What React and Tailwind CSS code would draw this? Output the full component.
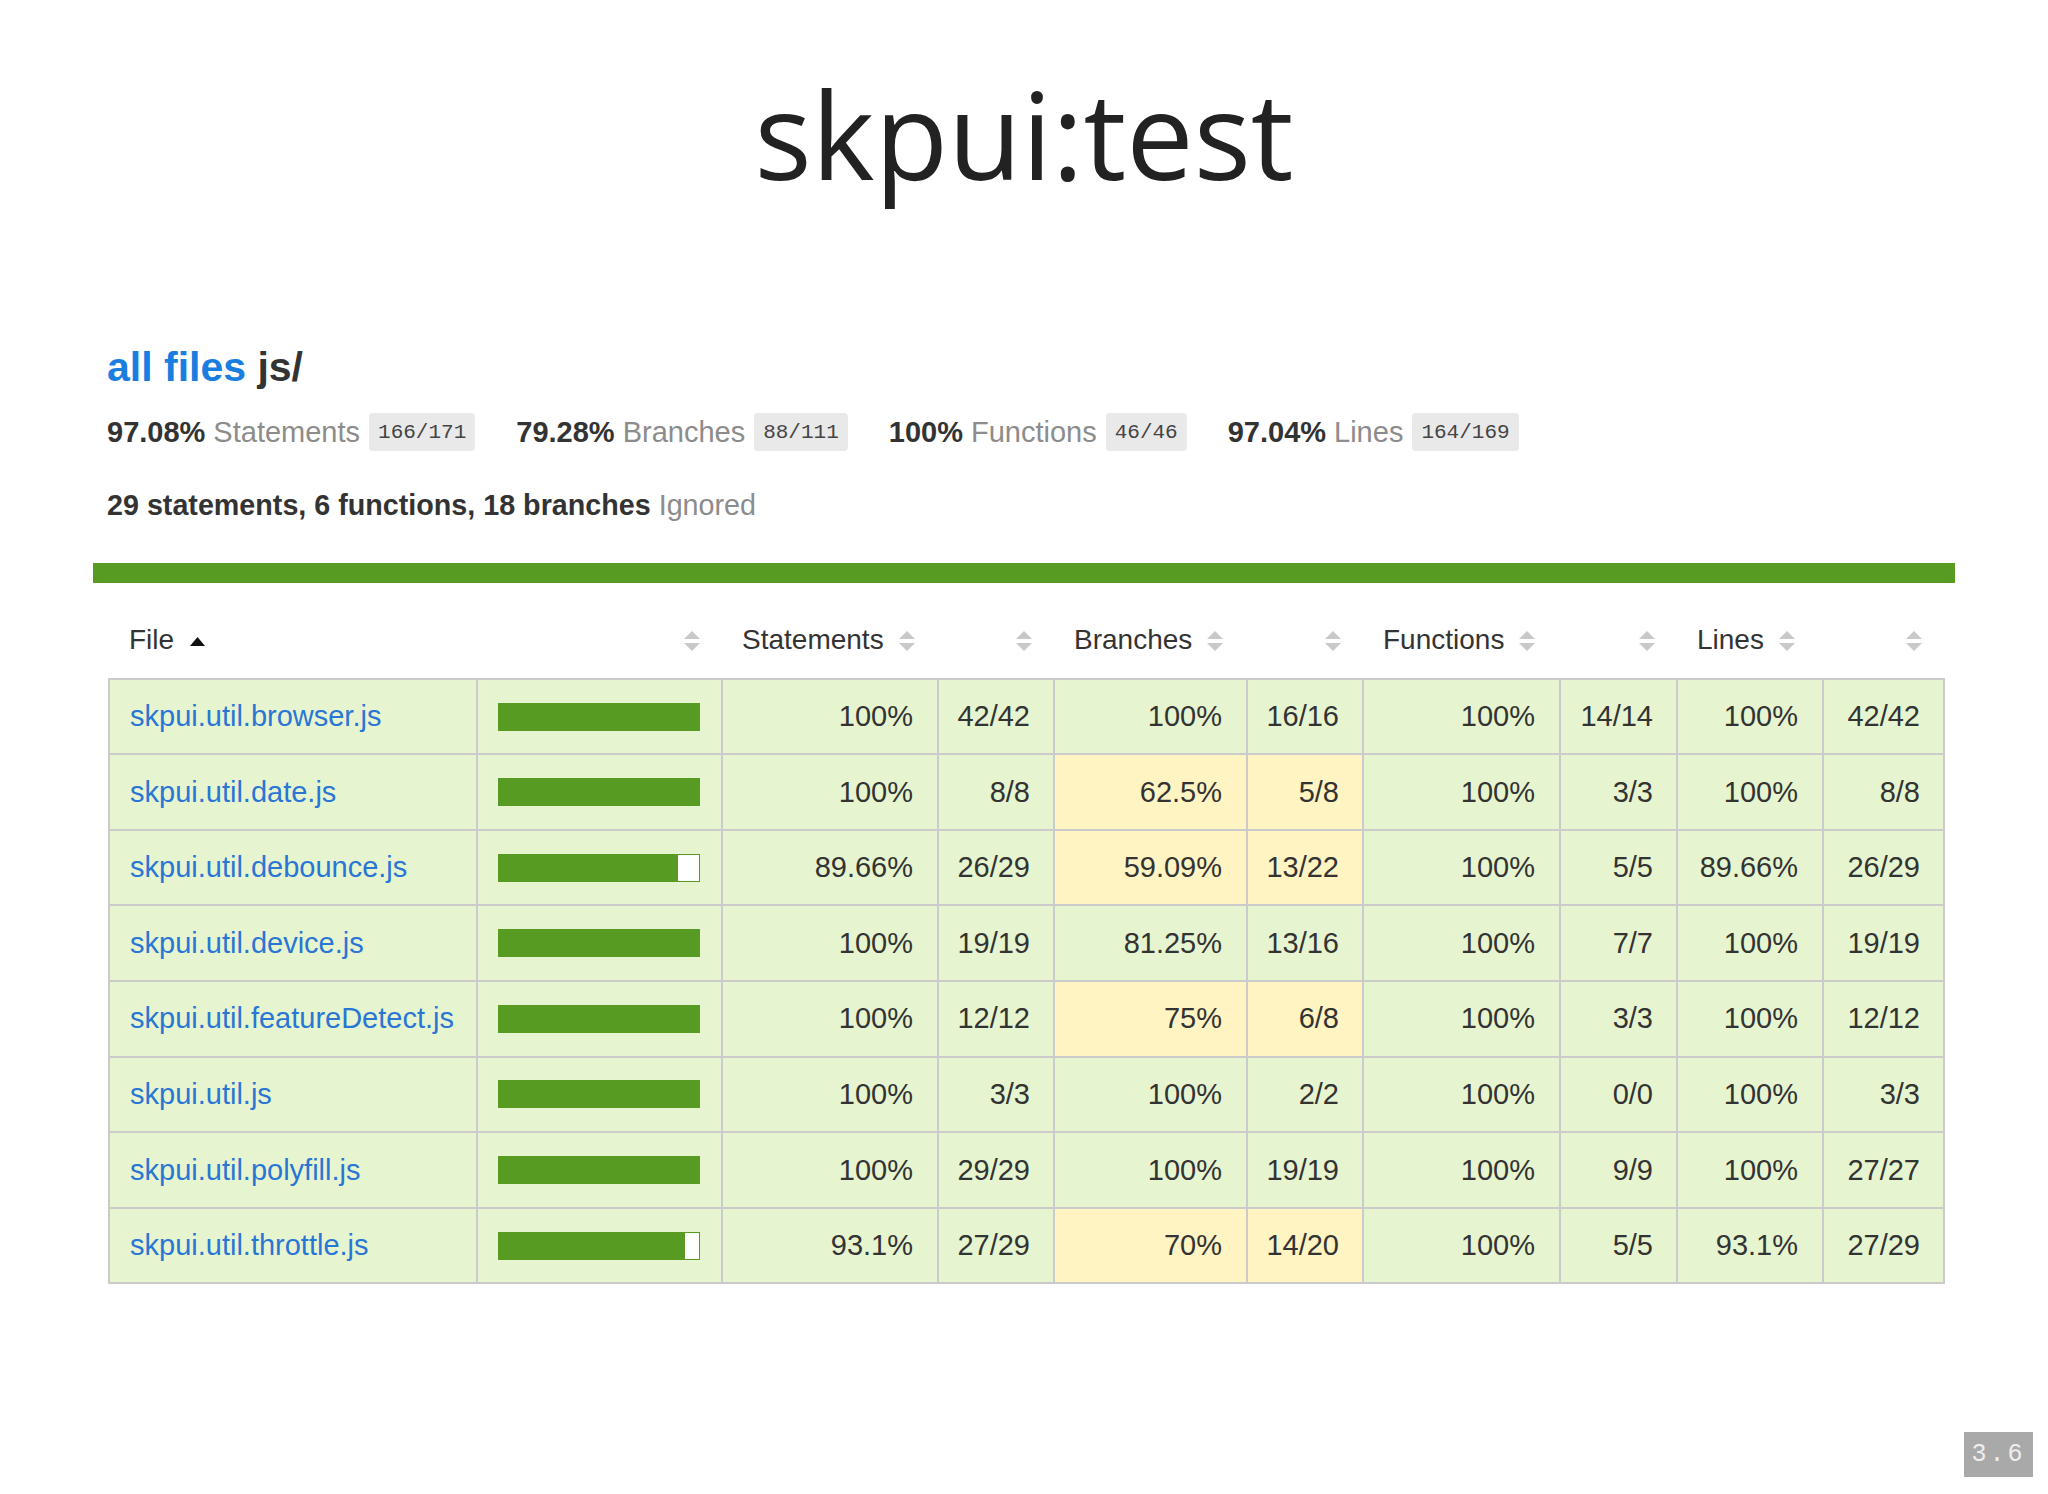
import React from "react";

const rows = [
  { file: "skpui.util.browser.js", pic: 100, s: ["100%", "42/42"], b: ["100%", "16/16"], f: ["100%", "14/14"], l: ["100%", "42/42"], bMed: false },
  { file: "skpui.util.date.js", pic: 100, s: ["100%", "8/8"], b: ["62.5%", "5/8"], f: ["100%", "3/3"], l: ["100%", "8/8"], bMed: true },
  { file: "skpui.util.debounce.js", pic: 89.66, s: ["89.66%", "26/29"], b: ["59.09%", "13/22"], f: ["100%", "5/5"], l: ["89.66%", "26/29"], bMed: true },
  { file: "skpui.util.device.js", pic: 100, s: ["100%", "19/19"], b: ["81.25%", "13/16"], f: ["100%", "7/7"], l: ["100%", "19/19"], bMed: false },
  { file: "skpui.util.featureDetect.js", pic: 100, s: ["100%", "12/12"], b: ["75%", "6/8"], f: ["100%", "3/3"], l: ["100%", "12/12"], bMed: true },
  { file: "skpui.util.js", pic: 100, s: ["100%", "3/3"], b: ["100%", "2/2"], f: ["100%", "0/0"], l: ["100%", "3/3"], bMed: false },
  { file: "skpui.util.polyfill.js", pic: 100, s: ["100%", "29/29"], b: ["100%", "19/19"], f: ["100%", "9/9"], l: ["100%", "27/27"], bMed: false },
  { file: "skpui.util.throttle.js", pic: 93.1, s: ["93.1%", "27/29"], b: ["70%", "14/20"], f: ["100%", "5/5"], l: ["93.1%", "27/29"], bMed: true },
];

const summary = [
  { pct: "97.08%", label: "Statements", frac: "166/171" },
  { pct: "79.28%", label: "Branches", frac: "88/111" },
  { pct: "100%", label: "Functions", frac: "46/46" },
  { pct: "97.04%", label: "Lines", frac: "164/169" },
];

// grey up/down sort arrows
const Sorter = () => (
  <svg width="16" height="20" viewBox="0 0 16 20" className="inline-block align-middle">
    <polygon points="8,0 16,8 0,8" fill="#c9c9c9" />
    <polygon points="0,12 16,12 8,20" fill="#c9c9c9" />
  </svg>
);

const SortedUp = () => (
  <svg width="15" height="9" viewBox="0 0 15 9" className="inline-block align-middle">
    <polygon points="7.5,0 15,9 0,9" fill="#111" />
  </svg>
);

const cell = "border-2 border-[#cbcbcb] h-[75.6px] p-0";

const App = () => {
  return (
    <div
      className="relative w-[2048px] h-[1494px] overflow-hidden bg-white text-[#333]"
      style={{ fontFamily: "'Liberation Sans', Arial, sans-serif" }}
    >
      {/* TITLE */}
      <h1
        className="mt-[74px] text-center text-[120px] leading-none font-medium text-[#222]"
        style={{ fontFamily: "'Open Sans', sans-serif" }}
      >
        skpui:test
      </h1>

      {/* REPORT HEADER */}
      <div className="pl-[107px] mt-[153px]">
        <h2 className="text-[41px] leading-none font-bold">
          <span className="text-[#1a7ee0]">all files</span> js/
        </h2>

        <div className="flex items-center h-[38px] mt-[25px] text-[29px] leading-none">
          {summary.map((s) => (
            <div key={s.label} className="flex items-center mr-[41px]">
              <span className="font-bold">{s.pct}</span>
              <span className="ml-[8px] text-[#8c8c8c]">{s.label}</span>
              <span
                className="ml-[9px] h-[38px] px-[9px] flex items-center rounded-[4px] bg-[#e9e9e9] text-[#444] text-[21px]"
                style={{ fontFamily: "'Liberation Mono', monospace" }}
              >
                {s.frac}
              </span>
            </div>
          ))}
        </div>

        <div className="mt-[40px] text-[28.7px] leading-none">
          <span className="font-bold">29 statements, 6 functions, 18 branches</span>{" "}
          <span className="text-[#8c8c8c]">Ignored</span>
        </div>
      </div>

      {/* STATUS BAR */}
      <div className="ml-[93px] mt-[43px] w-[1862px] h-[20px] bg-[#589b22]" />

      {/* TABLE */}
      <table className="ml-[108px] mt-[19px] w-[1835px] table-fixed border-collapse text-[29px] leading-none">
        <colgroup>
          <col className="w-[368px]" />
          <col className="w-[245px]" />
          <col className="w-[216px]" />
          <col className="w-[116px]" />
          <col className="w-[193px]" />
          <col className="w-[116px]" />
          <col className="w-[197px]" />
          <col className="w-[117px]" />
          <col className="w-[146px]" />
          <col className="w-[121px]" />
        </colgroup>
        <thead>
          <tr className="h-[77px] text-[28px]">
            <th className="pl-5 text-left font-normal">
              File<span className="ml-[16px]"><SortedUp /></span>
            </th>
            <th className="pr-[22px] text-right font-normal"><Sorter /></th>
            <th className="pl-5 text-left font-normal">
              Statements<span className="ml-[15px]"><Sorter /></span>
            </th>
            <th className="pr-[22px] text-right font-normal"><Sorter /></th>
            <th className="pl-5 text-left font-normal">
              Branches<span className="ml-[15px]"><Sorter /></span>
            </th>
            <th className="pr-[22px] text-right font-normal"><Sorter /></th>
            <th className="pl-5 text-left font-normal">
              Functions<span className="ml-[15px]"><Sorter /></span>
            </th>
            <th className="pr-[22px] text-right font-normal"><Sorter /></th>
            <th className="pl-5 text-left font-normal">
              Lines<span className="ml-[15px]"><Sorter /></span>
            </th>
            <th className="pr-[22px] text-right font-normal"><Sorter /></th>
          </tr>
        </thead>
        <tbody>
          {rows.map((r) => {
            const bg = "bg-[#e6f5d0]";
            const bBg = r.bMed ? "bg-[#fff4c2]" : "bg-[#e6f5d0]";
            return (
              <tr key={r.file}>
                <td className={`${cell} ${bg} pl-[20px] text-[#2a76d4]`}>{r.file}</td>
                <td className={`${cell} ${bg} pl-[20px]`}>
                  {r.pic === 100 ? (
                    <div className="w-[202px] h-[28px] bg-[#589b22]" />
                  ) : (
                    <div className="w-[202px] h-[28px] bg-white border border-[#589b22]">
                      <div className="h-full bg-[#589b22]" style={{ width: `${r.pic}%` }} />
                    </div>
                  )}
                </td>
                <td className={`${cell} ${bg} pr-[24px] text-right`}>{r.s[0]}</td>
                <td className={`${cell} ${bg} pr-[23px] text-right`}>{r.s[1]}</td>
                <td className={`${cell} ${bBg} pr-[24px] text-right`}>{r.b[0]}</td>
                <td className={`${cell} ${bBg} pr-[23px] text-right`}>{r.b[1]}</td>
                <td className={`${cell} ${bg} pr-[24px] text-right`}>{r.f[0]}</td>
                <td className={`${cell} ${bg} pr-[23px] text-right`}>{r.f[1]}</td>
                <td className={`${cell} ${bg} pr-[24px] text-right`}>{r.l[0]}</td>
                <td className={`${cell} ${bg} pr-[23px] text-right`}>{r.l[1]}</td>
              </tr>
            );
          })}
        </tbody>
      </table>

      {/* SLIDE NUMBER */}
      <div
        className="absolute right-[15px] bottom-[17px] w-[69px] h-[45px] flex items-center justify-center bg-[#a9a9a9] text-[#eeeeee] text-[25px] tracking-[3px]"
        style={{ fontFamily: "'Liberation Mono', monospace" }}
      >
        3.6
      </div>
    </div>
  );
};

export default App;
